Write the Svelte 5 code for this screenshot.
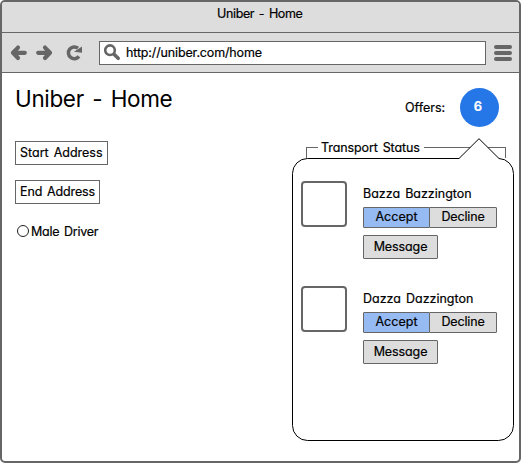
<script>
  const offers = [{ name: 'Bazza Bazzington' }, { name: 'Dazza Dazzington' }];
</script>

<div class="window">
  <header class="titlebar"><span class="t-title">Uniber - Home</span></header>
  <nav class="toolbar">
    <svg class="nav" width="76" height="20" viewBox="0 0 76 20" fill="none" stroke="#666">
      <path d="M4.5 9.8H15.8M9 4.6L4 9.8L9 15" stroke-width="4.2" stroke-linecap="round" stroke-linejoin="round" />
      <path d="M29.2 9.8H40.5M36 4.6L41 9.8L36 15" stroke-width="4.2" stroke-linecap="round" stroke-linejoin="round" />
      <path d="M69 5.2A5.9 5.9 0 1 0 70 13.4" stroke-width="3.5" />
      <path d="M73 3.4V9.8L65 8.8Z" fill="#666" stroke="none" />
    </svg>
    <div class="url">
      <svg width="18" height="18" viewBox="0 0 18 18" fill="none" stroke="#666">
        <circle cx="6" cy="6.2" r="4.8" stroke-width="2.6" />
        <path d="M10 10.3L14.2 14.3" stroke-width="3.6" stroke-linecap="round" />
      </svg>
      <span class="t-url">http://uniber.com/home</span>
    </div>
    <div class="burger"><i></i><i></i><i></i></div>
  </nav>

  <main>
    <section class="left">
      <h1>Uniber - Home</h1>
      <div class="field start"><span>Start Address</span></div>
      <div class="field end"><span>End Address</span></div>
      <label class="radio"><i></i><span>Male Driver</span></label>
    </section>

    <section class="right">
      <div class="offers"><span class="t-offers">Offers:</span><b>6</b></div>
      <div class="legend"><i class="before"></i><span>Transport Status</span><i class="after"></i></div>
      <div class="popover">
        <svg class="bubble" width="222" height="304" viewBox="0 0 222 304">
          <path
            d="M15.5 20.5H167L187 .7L207 20.5A15 15 0 0 1 221.5 35.5V287.5A15 15 0 0 1 206.5 302.5H15.5A15 15 0 0 1 .5 287.5V35.5A15 15 0 0 1 15.5 20.5Z"
            fill="#fff" stroke="#000" />
        </svg>
        <div class="list">
          {#each offers as offer}
            <article>
              <div class="avatar"></div>
              <div class="info">
                <span class="name">{offer.name}</span>
                <div class="choice">
                  <button class="accept"><span>Accept</span></button>
                  <button class="decline"><span>Decline</span></button>
                </div>
                <button class="message"><span>Message</span></button>
              </div>
            </article>
          {/each}
        </div>
      </div>
    </section>
  </main>
</div>

<style>
  :global(body) { background: #fff; }
  .window, .window * { box-sizing: border-box; }
  .window {
    width: 521px;
    height: 463px;
    border: 2px solid #666;
    border-radius: 5px;
    background: #fff;
    overflow: hidden;
    font: 12.5px/16px Inter, "Liberation Sans", sans-serif;
    font-feature-settings: "cv11", "ss03";
    -webkit-text-stroke: 0.2px currentColor;
    word-spacing: 1.5px;
    color: #000;
    display: flex;
    flex-direction: column;
    white-space: nowrap;
  }
  .titlebar {
    height: 31px;
    flex: none;
    background: #ddd;
    border-bottom: 1px solid #666;
    padding: 4px 0 0 215px;
  }
  .t-title { letter-spacing: -0.36px; }
  .t-url { letter-spacing: -0.14px; }
  .toolbar {
    height: 40px;
    flex: none;
    background: #ddd;
    border-bottom: 1px solid #666;
    display: flex;
    align-items: center;
    padding-left: 7px;
  }
  .nav { flex: none; }
  .url {
    width: 387px;
    height: 24px;
    margin-left: 14px;
    border: 1px solid #666;
    background: #fff;
    display: flex;
    align-items: center;
    padding-left: 4px;
  }
  .url svg { flex: none; margin-right: 4px; }
  .burger {
    width: 18px;
    height: 16px;
    margin-left: 8px;
    display: flex;
    flex-direction: column;
    justify-content: space-between;
  }
  .burger i { height: 4px; border-radius: 2px; background: #666; }
  main { flex: 1; display: flex; }
  .left {
    width: 290px;
    flex: none;
    padding: 11px 0 0 13px;
    display: flex;
    flex-direction: column;
    align-items: flex-start;
  }
  h1 { margin: 0 0 27px; font-size: 22.5px; line-height: 30px; font-weight: 400; letter-spacing: -0.35px; word-spacing: 2.5px; -webkit-text-stroke: 0; }
  .field { height: 24px; border: 1px solid #666; padding: 3px 0 0 4px; }
  .start { width: 93px; margin-bottom: 15px; }
  .end { width: 85px; margin-bottom: 19px; letter-spacing: -0.13px; }
  .radio { display: flex; align-items: center; height: 16px; padding-left: 2px; letter-spacing: -0.25px; }
  .radio span { padding-top: 2px; }
  .radio i { width: 12px; height: 12px; border: 1.5px solid #222; border-radius: 50%; margin-right: 2px; }
  .right { width: 222px; flex: none; }
  .offers { display: flex; align-items: center; padding: 15px 0 0 113px; height: 54px; }
  .t-offers { width: 55px; }
  .offers b {
    width: 39px;
    height: 39px;
    border-radius: 50%;
    background: #2577e8;
    color: #fff;
    text-align: center;
    font-size: 13px;
    line-height: 37px;
    padding-right: 3px;
    font-weight: 600;
  }
  .legend { display: flex; align-items: center; height: 16px; margin: 12px 0 0 14px; letter-spacing: -0.1px; }
  .legend i { height: 11px; align-self: flex-end; margin-bottom: -3px; border-top: 1px solid #666; }
  .legend .before { width: 12px; border-left: 1px solid #666; }
  .legend .after { width: 82px; border-right: 1px solid #666; }
  .legend span { width: 106px; padding: 2px 0 0 3px; }
  .popover { position: relative; height: 304px; margin-top: -17px; }
  .bubble { position: absolute; inset: 0; }
  .list { position: relative; padding: 43px 0 0 9px; }
  article { display: flex; height: 105px; }
  .avatar { width: 46px; height: 46px; flex: none; border: 2px solid #666; border-radius: 4px; background: #fff; }
  .info { margin-left: 16px; padding-top: 5px; display: flex; flex-direction: column; align-items: flex-start; }
  .name { height: 21px; letter-spacing: 0; }
  button {
    font: inherit;
    font-feature-settings: inherit;
    color: inherit;
    margin: 0;
    padding: 0;
    background: #ddd;
    border: 1px solid #666;
    border-radius: 1px;
    height: 21px;
    line-height: 17px;
    display: flex;
    justify-content: center;
  }
  .choice { display: flex; margin-bottom: 7px; }
  .accept { width: 67px; background: #95bbf2; letter-spacing: 0.05px; }
  .decline { width: 68px; margin-left: -1px; letter-spacing: -0.15px; }
  .message { width: 75px; height: 24px; line-height: 22px; letter-spacing: -0.1px; }
</style>
